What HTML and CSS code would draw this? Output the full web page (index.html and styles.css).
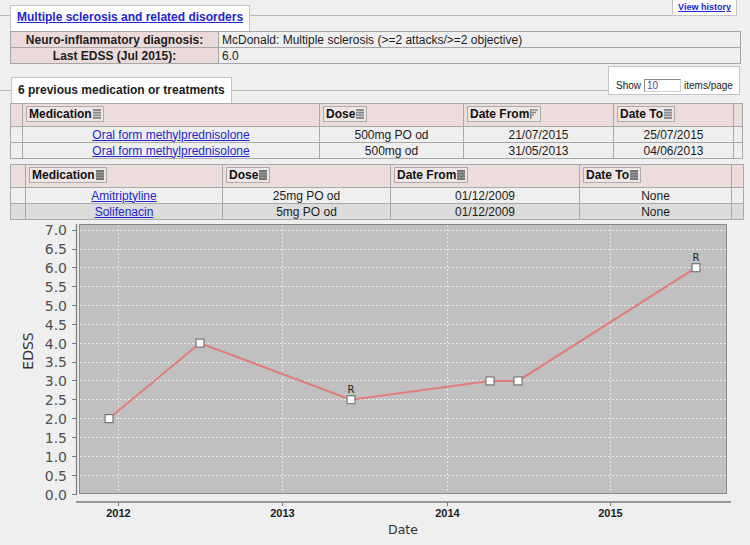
FILE: index.html
```html
<!DOCTYPE html>
<html>
<head>
<meta charset="utf-8">
<title>Multiple sclerosis and related disorders</title>
<link rel="stylesheet" href="styles.css">
</head>
<body>
<div class="toprow">
  <div class="rule lead10"></div>
  <div class="legend title"><a href="#">Multiple sclerosis and related disorders</a></div>
  <div class="rule fill"></div>
  <div class="history"><a href="#">View history</a></div>
</div>

<table class="info">
  <tr><th>Neuro-inflammatory diagnosis:</th><td>McDonald: Multiple sclerosis (&gt;=2 attacks/&gt;=2 objective)</td></tr>
  <tr><th>Last EDSS (Jul 2015):</th><td>6.0</td></tr>
</table>

<div class="secrow">
  <div class="rule lead11"></div>
  <div class="legend sec">6 previous medication or treatments</div>
  <div class="rule fill"></div>
  <div class="pager"><span>Show</span><input class="pin" value="10"><span>items/page</span></div>
</div>

<table class="grid g1">
  <colgroup><col class="c-a"><col class="c-b"><col class="c-c"><col class="c-d"><col class="c-e"><col class="c-f"></colgroup>
  <tr class="hd">
    <th></th>
    <th><span class="hl">Medication<svg class="ico" viewBox="0 0 8 10"><rect width="8" height="10" fill="#8e8e8e"/><path d="M0 2.5h8M0 5h8M0 7.5h8" stroke="#c8c8c8"/></svg></span></th>
    <th><span class="hl">Dose<svg class="ico" viewBox="0 0 8 10"><rect width="8" height="10" fill="#8e8e8e"/><path d="M0 2.5h8M0 5h8M0 7.5h8" stroke="#c8c8c8"/></svg></span></th>
    <th><span class="hl">Date From<svg class="ico" viewBox="0 0 8 10"><path d="M0 1h8M0 3.5h6M0 6h4M0 8.5h2" stroke="#8a8a8a" stroke-width="1.4"/><path d="M0.7 0v10" stroke="#8a8a8a" stroke-width="1.4"/></svg></span></th>
    <th><span class="hl">Date To<svg class="ico" viewBox="0 0 8 10"><rect width="8" height="10" fill="#8e8e8e"/><path d="M0 2.5h8M0 5h8M0 7.5h8" stroke="#c8c8c8"/></svg></span></th>
    <th></th>
  </tr>
  <tr>
    <td></td><td><a href="#">Oral form methylprednisolone</a></td><td>500mg PO od</td><td>21/07/2015</td><td>25/07/2015</td><td></td>
  </tr>
  <tr>
    <td></td><td><a href="#">Oral form methylprednisolone</a></td><td>500mg od</td><td>31/05/2013</td><td>04/06/2013</td><td></td>
  </tr>
</table>

<table class="grid g2">
  <colgroup><col class="d-a"><col class="d-b"><col class="d-c"><col class="d-d"><col class="d-e"><col class="d-f"></colgroup>
  <tr class="hd">
    <th></th>
    <th><span class="hl">Medication<svg class="ico" viewBox="0 0 8 10"><rect width="8" height="10" fill="#767676"/><path d="M0 2.5h8M0 5h8M0 7.5h8" stroke="#9a9a9a"/></svg></span></th>
    <th><span class="hl">Dose<svg class="ico" viewBox="0 0 8 10"><rect width="8" height="10" fill="#767676"/><path d="M0 2.5h8M0 5h8M0 7.5h8" stroke="#9a9a9a"/></svg></span></th>
    <th><span class="hl">Date From<svg class="ico" viewBox="0 0 8 10"><rect width="8" height="10" fill="#767676"/><path d="M0 2.5h8M0 5h8M0 7.5h8" stroke="#9a9a9a"/></svg></span></th>
    <th><span class="hl">Date To<svg class="ico" viewBox="0 0 8 10"><rect width="8" height="10" fill="#767676"/><path d="M0 2.5h8M0 5h8M0 7.5h8" stroke="#9a9a9a"/></svg></span></th>
    <th></th>
  </tr>
  <tr>
    <td></td><td><a href="#">Amitriptyline</a></td><td>25mg PO od</td><td>01/12/2009</td><td>None</td><td></td>
  </tr>
  <tr class="alt">
    <td></td><td><a href="#">Solifenacin</a></td><td>5mg PO od</td><td>01/12/2009</td><td>None</td><td></td>
  </tr>
</table>

<svg class="chart" width="750" height="324" viewBox="0 221 750 324">
  <rect x="79.5" y="224.5" width="647" height="269" fill="#c0c0c0" stroke="#8a8a8a"/>
  <g stroke="#e9e9e9" stroke-width="1" stroke-dasharray="2,2" fill="none">
    <path d="M80 475.5H726M80 456.5H726M80 437.5H726M80 418.5H726M80 399.5H726M80 380.5H726M80 362.5H726M80 343.5H726M80 324.5H726M80 305.5H726M80 286.5H726M80 267.5H726M80 249.5H726M80 230.5H726"/>
    <path d="M118.5 225V493M282.5 225V493M447.5 225V493M610.5 225V493"/>
  </g>
  <g stroke="#7c7c7c" fill="none">
    <path d="M76.5 224V494.5" stroke-width="1.2"/>
    <path d="M72 494.5H77M72 475.5H77M72 456.5H77M72 437.5H77M72 418.5H77M72 399.5H77M72 380.5H77M72 362.5H77M72 343.5H77M72 324.5H77M72 305.5H77M72 286.5H77M72 267.5H77M72 249.5H77M72 230.5H77"/>
    <path d="M76 502H731" stroke-width="1.4"/>
    <path d="M118.5 502V506M282.5 502V506M447.5 502V506M610.5 502V506"/>
  </g>
  <g class="ytick" text-anchor="end">
    <text x="67" y="499.5">0.0</text>
    <text x="67" y="480.5">0.5</text>
    <text x="67" y="461.5">1.0</text>
    <text x="67" y="442.5">1.5</text>
    <text x="67" y="423.5">2.0</text>
    <text x="67" y="405">2.5</text>
    <text x="67" y="386">3.0</text>
    <text x="67" y="367">3.5</text>
    <text x="67" y="348.5">4.0</text>
    <text x="67" y="329.5">4.5</text>
    <text x="67" y="310.5">5.0</text>
    <text x="67" y="291.5">5.5</text>
    <text x="67" y="273">6.0</text>
    <text x="67" y="254">6.5</text>
    <text x="67" y="235">7.0</text>
  </g>
  <g class="xtick" text-anchor="middle">
    <text x="118.5" y="517">2012</text>
    <text x="282.5" y="517">2013</text>
    <text x="447.5" y="517">2014</text>
    <text x="610.5" y="517">2015</text>
  </g>
  <text class="axlabel" x="403" y="534" text-anchor="middle">Date</text>
  <text class="axlabel ylab" x="33" y="351" text-anchor="middle" transform="rotate(-90 33 351)">EDSS</text>
  <polyline points="109,418.6 200,343.1 351,399.7 490,380.9 518,380.9 696,267.7" fill="none" stroke="#e27c7a" stroke-width="2"/>
  <g fill="#ffffff" stroke="#767676" stroke-width="1.2">
    <rect x="105" y="414.6" width="8" height="8"/>
    <rect x="196" y="339.1" width="8" height="8"/>
    <rect x="347" y="395.7" width="8" height="8"/>
    <rect x="486" y="376.9" width="8" height="8"/>
    <rect x="514" y="376.9" width="8" height="8"/>
    <rect x="692" y="263.7" width="8" height="8"/>
  </g>
  <g class="rlab" text-anchor="middle">
    <text x="351" y="393">R</text>
    <text x="696" y="261">R</text>
  </g>
</svg>
</body>
</html>
```

FILE: styles.css
```css
* { box-sizing: border-box; }
html, body { margin: 0; padding: 0; }
body {
  width: 750px;
  height: 545px;
  overflow: hidden;
  background: #efefef;
  font-family: "Liberation Sans", Arial, sans-serif;
  font-size: 12px;
  color: #1c1c1c;
}
a { color: #2424d8; }

.toprow, .secrow { display: flex; align-items: flex-start; }
.toprow { height: 31px; }
.secrow { height: 39px; }

.rule { border-top: 1px solid #b8b8b8; }
.toprow .rule { margin-top: 15px; }
.secrow .rule { margin-top: 26px; }
.lead10 { width: 10px; }
.lead11 { width: 11px; }
.fill { flex: 1; }

.legend {
  height: 26px;
  background: #fff;
  border: 1px solid #c4c4c4;
  border-bottom: none;
  font-weight: bold;
  line-height: 15px;
  padding: 4px 6px 0;
  white-space: nowrap;
}
.legend.title { margin-top: 5px; }
.legend.sec { margin-top: 13px; padding-top: 5px; }

.history {
  width: 65px;
  height: 16px;
  margin-right: 13px;
  background: #fff;
  border: 1px solid #c4c4c4;
  border-top: none;
  font-size: 9px;
  font-weight: bold;
  line-height: 14px;
  text-align: center;
}

.pager {
  display: flex;
  align-items: center;
  gap: 3px;
  width: 132px;
  height: 29px;
  margin-top: 2px;
  margin-right: 10px;
  padding: 9px 0 0 7px;
  background: #fff;
  border: 1px solid #c4c4c4;
  font-size: 10px;
  color: #222;
}
.pin {
  width: 37px;
  height: 13px;
  padding: 0 2px;
  border: 1px solid #8a8a8a;
  border-right-color: #d0d0d0;
  border-bottom-color: #d0d0d0;
  font: 10px "Liberation Sans", Arial, sans-serif;
  color: #5a3ea0;
  background: #fff;
}

.info {
  margin-left: 10px;
  width: 731px;
  border-collapse: collapse;
  table-layout: fixed;
}
.info th, .info td {
  height: 16px;
  padding: 0 3px;
  line-height: 14px;
  border: 1px solid #a6a6a6;
}
.info th { width: 208px; background: #ebdada; text-align: center; }
.info td { background: #efefef; }

.grid {
  margin-left: 10px;
  border-collapse: collapse;
  table-layout: fixed;
}
.grid th, .grid td { border: 1px solid #a9a9a9; }
.grid .hd th {
  height: 23px;
  padding: 2px 3px 0;
  vertical-align: top;
  text-align: left;
  background: #ecdcdc;
}
.grid td {
  height: 16px;
  padding: 0 2px;
  line-height: 14px;
  text-align: center;
  background: #efefef;
}
.grid tr.alt td { background: #dcdcdc; }
.hl {
  display: inline-flex;
  align-items: center;
  gap: 1px;
  height: 16px;
  padding: 0 2px;
  border: 1px solid #acacac;
  background: #efe5e5;
  font-weight: bold;
  color: #111;
}
.ico { width: 8px; height: 10px; display: block; }

.g1 { width: 732px; }
.c-a { width: 12px; } .c-b { width: 297px; } .c-c { width: 144px; }
.c-d { width: 150px; } .c-e { width: 120px; } .c-f { width: 9px; }

.g2 { width: 733px; margin-top: 5px; }
.d-a { width: 15px; } .d-b { width: 197px; } .d-c { width: 168px; }
.d-d { width: 189px; } .d-e { width: 152px; } .d-f { width: 12px; }

.chart { display: block; margin-top: 1px; }
.ytick text { font-family: "DejaVu Sans", sans-serif; font-size: 14px; fill: #505050; }
.xtick text { font-family: "Liberation Sans", Arial, sans-serif; font-weight: bold; font-size: 11px; fill: #222; }
.axlabel { font-family: "DejaVu Sans", sans-serif; font-size: 12.5px; fill: #333; }
.ylab { font-size: 14px; }
.rlab text { font-family: "DejaVu Sans", sans-serif; font-size: 10px; fill: #222; }
```
